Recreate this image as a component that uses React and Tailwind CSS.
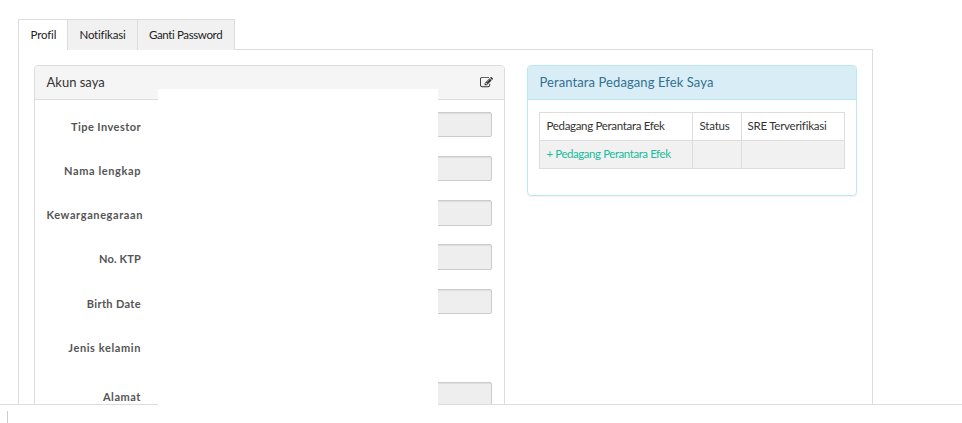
const fields = [
  { label: 'Tipe Investor', row: 'h-11', input: 'h-[25px]', text: 'tracking-[0.45px]' },
  { label: 'Nama lengkap', row: 'h-11', input: 'h-[25px]', text: 'tracking-[0.6px]' },
  { label: 'Kewarganegaraan', row: 'h-11', input: 'h-[26px]', text: 'tracking-[0.6px] -mr-0.5' },
  { label: 'No. KTP', row: 'h-[45px]', input: 'h-[26px]', text: 'tracking-[0.15px]' },
  { label: 'Birth Date', row: 'h-11', input: 'h-[25px]', text: 'tracking-[0.35px]' },
  { label: 'Jenis kelamin', row: 'h-[49px]', input: null, text: 'tracking-[0.6px]' },
  { label: 'Alamat', row: 'h-11', input: 'h-[26px]', text: 'tracking-[0.55px]' },
];

function EditIcon() {
  return (
    <svg viewBox="0 0 1792 1792" className="h-[13px] w-[13px] fill-[#333]">
      <path d="M888 1184l116-116-152-152-116 116v56h96v96h56zm440-720q-16-16-33 1l-350 350q-17 17-1 33t33-1l350-350q17-17 1-33zm80 594v190q0 119-84.500 203.500t-203.500 84.500h-832q-119 0-203.500-84.500t-84.500-203.500v-832q0-119 84.500-203.500t203.500-84.500h832q63 0 117 25 15 7 18 23 3 17-9 29l-49 49q-14 14-32 8-23-6-45-6h-832q-66 0-113 47t-47 113v832q0 66 47 113t113 47h832q66 0 113-47t47-113v-126q0-13 9-22l64-64q15-15 35-7t20 29zm-96-738l288 288-672 672h-288v-288zm444 132l-92 92-288-288 92-92q28-28 68-28t68 28l152 152q28 28 28 68t-28 68z" />
    </svg>
  );
}

function Tabs() {
  return (
    <div className="flex h-[31px] text-[11.5px] leading-[29px] text-[#222]">
      <div className="w-[49px] border-l border-t border-[#ddd] bg-white pl-[11.5px]"><span className="tracking-[-0.15px]">Profil</span></div>
      <div className="w-[70px] border-l border-t border-[#ddd] bg-[#f1f1f1] pl-[11.5px]"><span className="tracking-[-0.2px]">Notifikasi</span></div>
      <div className="w-[98px] whitespace-nowrap border-x border-t border-[#ddd] bg-[#f1f1f1] pl-[11px]"><span className="tracking-[-0.38px]">Ganti Password</span></div>
      <div className="flex-1 border-b border-[#ddd]" />
    </div>
  );
}

function AccountPanel() {
  return (
    <section className="h-[400px] w-[471px] rounded-t border border-[#ddd]">
      <header className="flex h-[34px] items-center justify-between rounded-t-[3px] border-b border-[#ddd] bg-[#f5f5f5] pl-[11.5px] pr-[11px] text-[#333]">
        <h3 className="text-[13px]">Akun saya</h3>
        <EditIcon />
      </header>
      <div className="pr-3 pt-3">
        {fields.map((f) => (
          <div key={f.label} className={`flex items-start ${f.row}`}>
            <div className="flex w-[106px] shrink-0 justify-end pt-[7px] text-[11px] font-bold leading-4 text-[#555]">
              <span className={`whitespace-nowrap ${f.text}`}>{f.label}</span>
            </div>
            {f.input && (
              <div className={`ml-6 flex-1 rounded-[2px] border border-[#ccc] bg-[#eee] shadow-[inset_0_1px_1px_rgba(0,0,0,0.075)] ${f.input}`} />
            )}
          </div>
        ))}
      </div>
    </section>
  );
}

function BrokerPanel() {
  return (
    <section className="h-[131px] w-[330px] rounded border border-[#bce8f1] shadow-[0_1px_1px_rgba(0,0,0,0.05)]">
      <header className="flex h-[34px] items-center rounded-t-[3px] border-b border-[#bce8f1] bg-[#d9edf7] pl-[11.5px] text-[#31708f]">
        <h3 className="text-[13px] tracking-[0.09px]">Perantara Pedagang Efek Saya</h3>
      </header>
      <div className="ml-[11px] mt-3 grid w-[306px] grid-cols-[153px_49px_103px] border-r border-b border-[#ddd] text-[11.5px] leading-[26px] text-[#333] [&>div]:h-7 [&>div]:whitespace-nowrap [&>div]:border-l [&>div]:border-t [&>div]:border-[#ddd] [&>div]:pl-[6.5px]">
        <div><span className="tracking-[-0.32px]">Pedagang Perantara Efek</span></div>
        <div><span className="tracking-[-0.2px]">Status</span></div>
        <div><span className="-ml-px tracking-[-0.25px]">SRE Terverifikasi</span></div>
        <div className="bg-[#f1f1f1] text-[#18bc9c]"><span className="tracking-[-0.44px]">+ Pedagang Perantara Efek</span></div>
        <div className="bg-[#f1f1f1]" />
        <div className="bg-[#f1f1f1]" />
      </div>
    </section>
  );
}

export default function App() {
  return (
    <div className="relative h-[423px] w-[962px] overflow-hidden bg-white font-['Lato',sans-serif]">
      <main className="h-[405px] overflow-hidden border-b border-[#ddd] pl-[18px] pt-[19px]">
        <div className="w-[855px]">
          <Tabs />
          <div className="flex h-[400px] items-start gap-[22px] border-x border-[#ddd] pl-[15px] pt-[15px]">
            <AccountPanel />
            <BrokerPanel />
          </div>
        </div>
      </main>
      <div className="ml-[7px] mt-1.5 h-3 w-px bg-[#ccc]" />
      <div className="absolute left-[158px] top-[89px] h-[316px] w-[280px] bg-white" />
    </div>
  );
}
